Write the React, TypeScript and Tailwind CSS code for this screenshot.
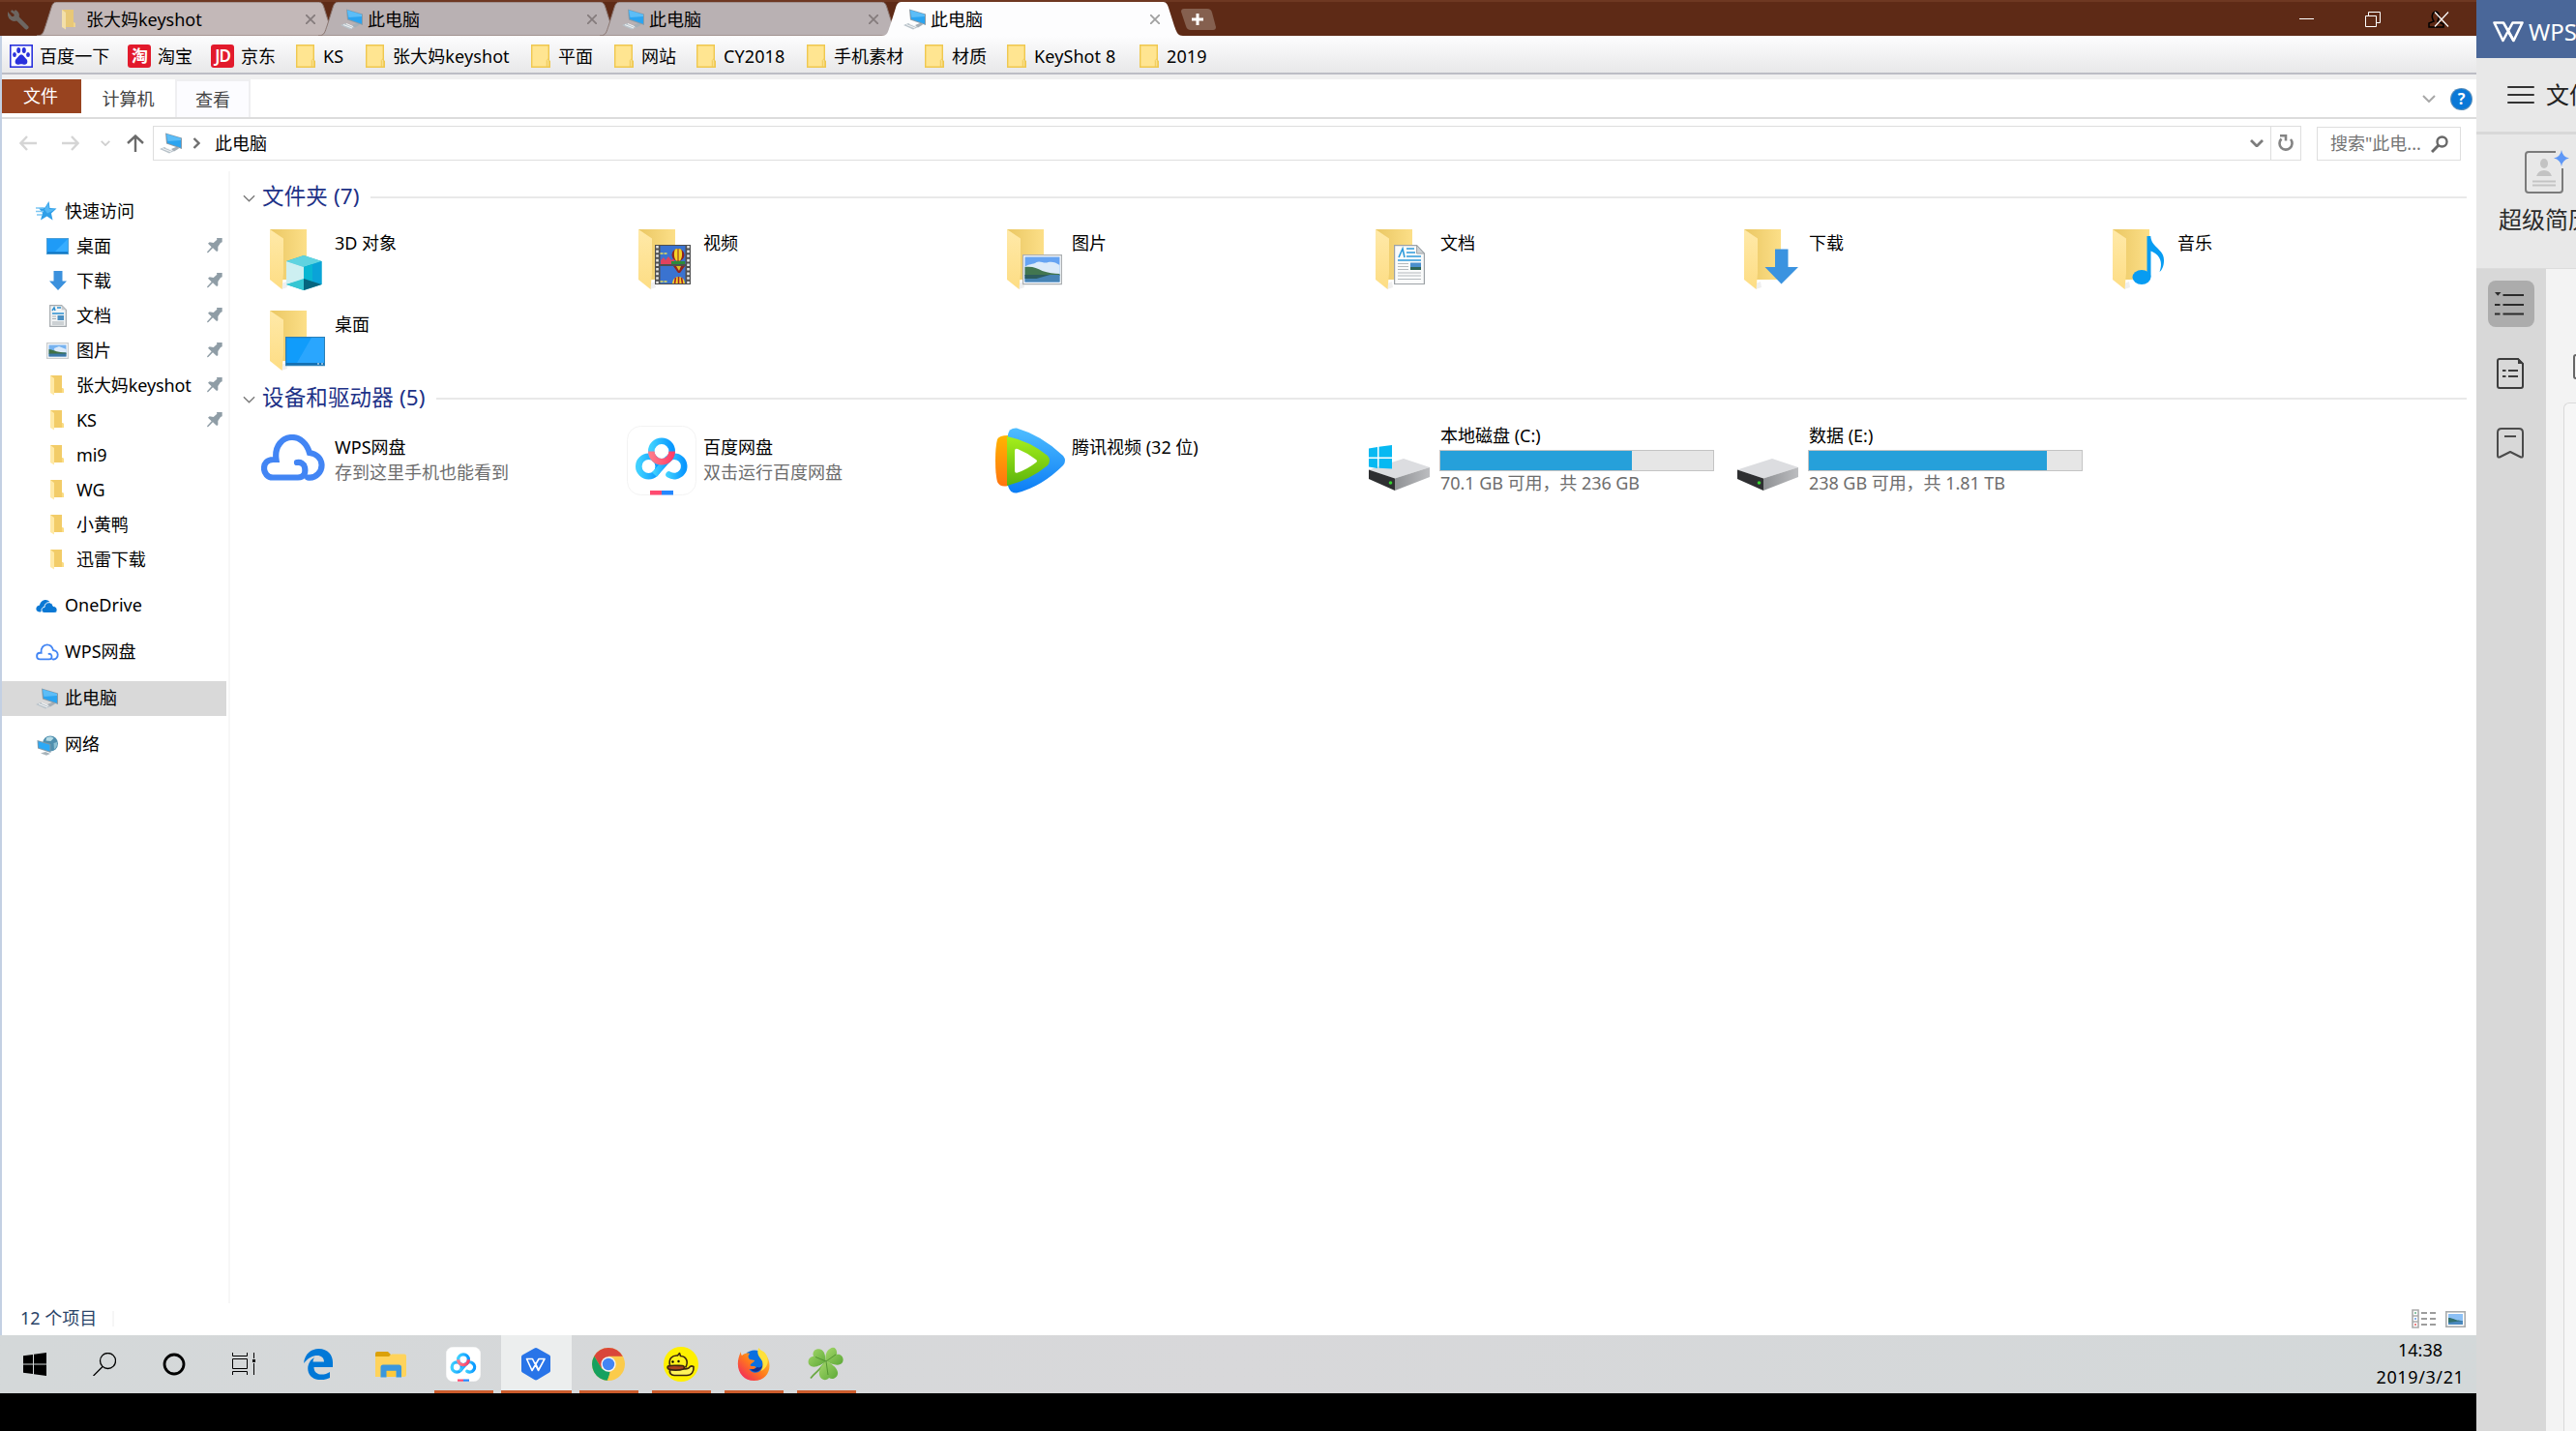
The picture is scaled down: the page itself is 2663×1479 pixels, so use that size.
import type { ReactNode } from "react";
import clsx from "clsx";

/* ---------- small icons ---------- */

function PcIcon({ className }: { className?: string }) {
  return (
    <svg viewBox="0 0 24 22" className={clsx("h-[22px] w-6 shrink-0", className)}>
      <path d="M0 17l5-2 10 4-5 2.600z" fill="#b9c3ca" />
      <path d="M3 16.500l9 3.500M6 15.500l7 3" stroke="#fff" strokeWidth=".8" />
      <path d="M12 17l6-2.500 2 2-5 3z" fill="#a4aeb6" />
      <path d="M6 .5l17 5v11.500L7 11.500z" fill="#8b9aa5" />
      <path d="M7 1.500l15 4.600v9.600L8 10.700z" fill="#2ba4f0" />
      <path d="M7 1.500l15 4.600v2L8.500 9z" fill="#5cbdf7" />
    </svg>
  );
}

function FolderSmall() {
  return (
    <svg viewBox="0 0 16 22" className="h-[22px] w-4 shrink-0">
      <path d="M1 1h12v13l2 1v4H4z" fill="#f2cc68" />
      <path d="M1 1l4 3v17.500L1 19z" fill="#ffe9a6" />
      <path d="M13 14l2 1v4h-2z" fill="#fbdc83" />
    </svg>
  );
}

function FolderFlat() {
  return (
    <svg viewBox="0 0 24 24" className="h-6 w-6 shrink-0">
      <path d="M3.700.7h17.600v15.800l1 .8v6H3.700z" fill="#ffe591" stroke="#efc850" strokeWidth="1.400" />
      <path d="M19.300 23v-6.500l1.800-2v8.500z" fill="#fff0b8" stroke="#efc850" strokeWidth="1" />
    </svg>
  );
}

function BaiduPaw() {
  return (
    <svg viewBox="0 0 24 24" className="h-6 w-6 shrink-0">
      <rect x=".8" y=".8" width="22.400" height="22.400" fill="#fff" stroke="#2a32dc" strokeWidth="1.600" />
      <g fill="#2a32dc">
        <ellipse cx="9.200" cy="6" rx="2" ry="3" />
        <ellipse cx="14.800" cy="6" rx="2" ry="3" />
        <ellipse cx="5" cy="10.500" rx="1.900" ry="2.500" />
        <ellipse cx="19" cy="10.500" rx="1.900" ry="2.500" />
        <path d="M12 10.500c2.400 0 3 2.500 5 4.300 2.300 2 1.500 6-1.400 6-1.500 0-2.200-.6-3.600-.6s-2.100.6-3.600.6c-2.900 0-3.700-4-1.400-6 2-1.800 2.600-4.300 5-4.300z" />
      </g>
    </svg>
  );
}

function BadgeIcon({ children }: { children: ReactNode }) {
  return (
    <span className="flex h-6 w-6 shrink-0 items-center justify-center rounded-[3px] bg-[#e21a2c] text-[17px] leading-none font-semibold tracking-[-1px] text-white">
      {children}
    </span>
  );
}

function Pin() {
  return (
    <svg viewBox="0 0 48 48" className="h-4 w-4" fill="#8f9da6">
      <path d="M30 0h17v13l-5 2-8 12v13l-4 2-12-11L4 45l-4 1 1-4 13-14L3 17l5-4 12 2L31 5z" />
    </svg>
  );
}

function Star() {
  return (
    <svg viewBox="0 0 22 20" className="h-5 w-[22px]">
      <path d="M13.500 0l1 7 7 .5-5.500 5 1.500 7-6-4-6.500 4 2-7.500L3 7l6.500-.5z" fill="#2f9fe8" />
      <path d="M0 7h8M-1 10.500h9M1 14h6" stroke="#7cc6f3" strokeWidth="1.600" />
      <path d="M13 2l.8 6L20 8.500l-8 4-3-4z" fill="#55b8f5" />
    </svg>
  );
}

function DesktopSmall() {
  return (
    <svg viewBox="0 0 23 17" className="h-[17px] w-[23px]">
      <rect x=".5" y=".5" width="22" height="16" fill="#1f9bf7" stroke="#4c9fd6" />
      <path d="M1 14.500h21v1.500H1z" fill="#1272bd" />
      <path d="M22 1v13H9z" fill="#37adff" />
    </svg>
  );
}

function ArrowSmall() {
  return (
    <svg viewBox="0 0 20 20" className="h-5 w-5">
      <path d="M5.500 0h9v10.500H19L10 20 1 10.500h4.500z" fill="#3b91dd" />
    </svg>
  );
}

function DocSmall() {
  return (
    <svg viewBox="0 0 18 23" className="h-[23px] w-[18px]">
      <path d="M.7.700h12l4.600 4.600v17H.7z" fill="#f2f4f5" stroke="#a3a8ac" strokeWidth="1.200" />
      <path d="M12.700.700v4.600h4.600z" fill="#c6cacd" />
      <path d="M3 6l2-3 1 3M8 3h4M3 9h12" stroke="#2d8fd0" strokeWidth="1.500" fill="none" />
      <path d="M8.500 11h6.500v5H8.500z" fill="#4b8fc2" />
      <path d="M3 12h4M3 14.500h4M3 18h12M3 20h12" stroke="#a5adb3" strokeWidth="1.200" />
    </svg>
  );
}

function PictureSmall() {
  return (
    <svg viewBox="0 0 23 17" className="h-[17px] w-[23px]">
      <rect x=".6" y=".6" width="21.800" height="15.800" fill="#fafafa" stroke="#c9ccce" strokeWidth="1.200" />
      <path d="M2.500 2.500h18v12h-18z" fill="#77b3f0" />
      <path d="M8 6l5-2 7.500 3v3h-12z" fill="#dceafb" />
      <path d="M2.500 7c4 0 6 3 18 3.500v1.500h-18z" fill="#3f7045" />
      <path d="M2.500 11.500h18v3h-18z" fill="#3b77a6" />
    </svg>
  );
}

function OneDrive() {
  return (
    <svg viewBox="0 0 23 15" className="h-[15px] w-[23px]">
      <path d="M5 13.500C-1 14-1 7 4 6.500 5 1 11-1 14.500 3" fill="#0a78d4" />
      <path d="M9 14.500c-4 0-4-6 0-6 0-6 8-6.500 9-1 5 0 5.500 7 1 7z" fill="#0a78d4" stroke="#fff" strokeWidth="1" />
    </svg>
  );
}

function Cloud({ className, thin }: { className: string; thin?: boolean }) {
  return (
    <svg viewBox="0 0 66 48" className={className} fill="none" stroke="#4285f4" strokeLinecap="round" strokeWidth={thin ? 5 : 6.200}>
      <path d="M48 44.500C57 46 63 38 62.500 31c-.5-6-5-11-12.500-12C47 9 40 3 32 3 22 3 13.500 12 15.500 26H12.500C6 26 3 30 3 35s3.500 9.500 9 9.500h26C45 44.500 46 39 45 34c-.8-4-4-5.500-8-5" />
    </svg>
  );
}

function Network() {
  return (
    <svg viewBox="0 0 22 21" className="h-[21px] w-[22px]">
      <circle cx="14" cy="8.500" r="8" fill="#4f8fae" />
      <path d="M10 2.500c3-1.500 6-1 7.500.5l-3 3-5-.5z" fill="#b7dce6" />
      <path d="M17.500 8l3.500-1c.5 3-.5 6-3 7.500z" fill="#8cc0d2" />
      <path d="M4 18.500l5-1.500 5 2-4 1.800z" fill="#a8b3ba" />
      <path d="M.5 5l14 4v9L1 13.500z" fill="#7f98a6" />
      <path d="M1.500 6.300l12 3.500v6.700L2 12.700z" fill="#2da9f5" />
    </svg>
  );
}

function Chevron({ className, width = 2 }: { className: string; width?: number }) {
  return (
    <svg viewBox="0 0 14 8" className={className} fill="none" stroke="currentColor" strokeWidth={width}>
      <path d="M1 1l6 6 6-6" />
    </svg>
  );
}

/* ---------- large icons ---------- */

function FolderBig({ children }: { children: ReactNode }) {
  return (
    <svg viewBox="0 0 60 64" className="ml-3 h-16 w-[60px]">
      <defs>
        <linearGradient id="fback" x1="0" y1="0" x2="1" y2="0">
          <stop offset="0" stopColor="#eac763" />
          <stop offset="1" stopColor="#fcdf88" />
        </linearGradient>
        <linearGradient id="ffront" x1="0" y1="0" x2="0" y2="1">
          <stop offset="0" stopColor="#ffe9a8" />
          <stop offset="1" stopColor="#fddd84" />
        </linearGradient>
      </defs>
      <path d="M0 0h38v52H12z" fill="url(#fback)" />
      <path d="M12 56l5-2 1 6-6 2z" fill="#efefef" />
      <path d="M0 0l14 9.500V45l-1.500 17L0 52z" fill="url(#ffront)" />
      {children}
    </svg>
  );
}

const cube = (
  <g>
    <path d="M35 27l18.500 6v24L35 63 17 57V33z" fill="#19b5cb" />
    <path d="M35 27l18.500 6L35 39 17 33z" fill="#5fd3e0" />
    <path d="M17 33l18 6v13l-18 5z" fill="#cdeff1" />
    <path d="M53.500 33L35 39v13l18.500 5z" fill="#0aa3d8" />
    <path d="M35 39l9-3v19l-9-4z" fill="#08b6d2" />
    <path d="M35 51l18.500 6L35 63z" fill="#05657f" />
    <path d="M35 51l-18 6 18 6z" fill="#35c6d3" />
  </g>
);

const film = (
  <g>
    <path d="M17 16h37v41H17z" fill="#4e4f50" />
    <path d="M22.500 17h26v19h-26zM22.500 38h26v18h-26z" fill="#3a73d0" />
    <path d="M19.500 17v39M51.500 17v39" stroke="#e8e8e8" strokeWidth="2.600" strokeDasharray="2.600 2" />
    <path d="M23 32l3-3 2 3 3-4 3 4 3-2v6H23z" fill="#e0425f" />
    <path d="M34 33h14v3H34z" fill="#2b8a3c" />
    <path d="M22.500 25h7M22.500 54h7" stroke="#e7df57" strokeWidth="1.500" strokeDasharray="3 1" />
    <ellipse cx="41" cy="26.500" rx="6.500" ry="6.500" fill="#8f2420" />
    <path d="M38 20.500c-2 4-1 10 1 12h1.500V20zM44 20.500c2 4 1 10-1 12h-1.500V20z" fill="#f5d327" />
    <path d="M36 38h12l-5 7h-2z" fill="#8f2420" />
    <path d="M39 38h5l-2 5z" fill="#e0bd27" />
    <path d="M35 56a6.500 7 0 0113 0z" fill="#f5d327" />
    <path d="M38.500 50l-1 6M44.500 50l1 6M41.500 49v7" stroke="#a5232a" strokeWidth="1.600" />
  </g>
);

const photo = (
  <g>
    <path d="M16.600 26.600h39.800v30H16.600z" fill="#fcfcfc" stroke="#abafb2" strokeWidth="1.200" />
    <path d="M18.500 28.500h36v26h-36z" fill="#66a4f2" />
    <path d="M18.500 39c4-4 8-2 12-5 4-2 8 2 12 0 4-1 8 0 12 3v10h-36z" fill="#dcebfa" />
    <path d="M18.500 39c8-1 12 1 18 4 6 2 12 3 18 3v2h-36z" fill="#427650" />
    <path d="M18.500 47h36v7.500h-36z" fill="#4784b5" />
    <path d="M18.500 47h26l-14 4h-12z" fill="#2c5c5e" />
  </g>
);

const paper = (
  <g>
    <path d="M19.600 16.600h23L50.400 25v31.500H19.600z" fill="#fafbfb" stroke="#9da2a6" strokeWidth="1.200" />
    <path d="M42.600 16.600V25h7.800z" fill="#cfd3d6" stroke="#9da2a6" />
    <path d="M24 29l4-9 2 9M32 20h8M32 24h9M32 28h15M23 32h24" fill="none" stroke="#2e9bdb" strokeWidth="1.600" />
    <path d="M36 34.500h11v7.500H36z" fill="#4b90cd" />
    <path d="M36 39h11v3H36z" fill="#2e6658" />
    <path d="M23 35.500h11M23 38.500h11M23 41.500h11M23 45h24M23 48h24M23 51.500h24" stroke="#b4babe" strokeWidth="1.200" />
  </g>
);

const downArrow = <path d="M32 20.500h13.500V39H56L38.500 56.500 21.500 39H32z" fill="#3a93e0" />;

const note = (
  <g fill="#079cf2">
    <ellipse cx="30" cy="49.500" rx="9.500" ry="7.500" />
    <path d="M35.500 7h3.800c.5 12 13.700 13 13.700 25 0 6-2 10-4.500 12 2-6 2.500-12-2-17-2-2-5-4-7-4.500V49h-4z" />
  </g>
);

const screen = (
  <g>
    <path d="M16.600 27.600h39.800v29H16.600z" fill="#109cfb" stroke="#2a7fb8" strokeWidth="1.200" />
    <path d="M56 28v26H28l15-26z" fill="#33aaff" opacity=".75" />
    <path d="M17 54h39v2H17z" fill="#1370b3" />
    <path d="M49 54.500h2v1h-2zM53 54.500h2v1h-2z" fill="#fff" />
  </g>
);

function BaiduDisk({ className }: { className: string }) {
  return (
    <svg viewBox="0 0 72 72" className={className}>
      <defs>
        <linearGradient id="bd" x1="0" y1="0" x2="1" y2="0">
          <stop offset="0" stopColor="#3fd0ff" />
          <stop offset="1" stopColor="#0a98ff" />
        </linearGradient>
        <linearGradient id="bdpink" x1="0" y1="0" x2="1" y2="0">
          <stop offset="0" stopColor="#ff7a8a" />
          <stop offset="1" stopColor="#ff3f68" />
        </linearGradient>
      </defs>
      <rect x=".5" y=".5" width="71" height="71" rx="14" fill="#fff" stroke="#f3f3f3" />
      <g fill="none" stroke="url(#bd)" strokeWidth="6.600">
        <circle cx="22.500" cy="42" r="10.200" />
        <path d="M42 34.500a10.200 10.200 0 111.500 16" strokeLinecap="round" />
        <path d="M28.500 50.500L43 34" />
        <circle cx="36" cy="26.500" r="10.700" />
      </g>
      <path d="M25.300 26.500a10.700 10.700 0 0021.400 0" fill="none" stroke="url(#bdpink)" strokeWidth="6.600" />
      <path d="M24 67h12v4.500H24z" fill="#ff4a70" />
      <path d="M36 67h12v4.500H36z" fill="#2487ff" />
    </svg>
  );
}

function TencentVideo() {
  return (
    <svg viewBox="0 0 72 68" className="mt-0.5 h-[68px] w-[72px]">
      <defs>
        <linearGradient id="tb" x1="0" y1="0" x2="0" y2="1">
          <stop offset="0" stopColor="#4fbdff" />
          <stop offset="1" stopColor="#0b7df5" />
        </linearGradient>
        <linearGradient id="tg" x1="0" y1="0" x2="0" y2="1">
          <stop offset="0" stopColor="#a6ef1c" />
          <stop offset="1" stopColor="#5cb40c" />
        </linearGradient>
        <linearGradient id="to" x1="0" y1="0" x2="0" y2="1">
          <stop offset="0" stopColor="#ffb400" />
          <stop offset="1" stopColor="#ff7410" />
        </linearGradient>
      </defs>
      <path d="M13 7Q14 0 22 .5 48 8 70 29q4 5 0 10Q48 61 22 67.500 15 68 13 60z" fill="url(#tb)" />
      <path d="M0 34Q0 20 2 12 4 8 13 8v52q-8 2-11-4Q0 48 0 34z" fill="url(#to)" />
      <path d="M12 9Q36 14 54 29q4 5 0 10Q36 54 12 60z" fill="url(#tg)" />
      <path d="M20 24q0-3 3-2 10 4 19 11 2 1.500 0 3-9 7-19 10.500-3 1-3-2z" fill="#fff" />
    </svg>
  );
}

function Drive({ windows }: { windows?: boolean }) {
  return (
    <svg viewBox="0 0 64 48" className="mt-[20px] ml-[5px] h-12 w-16">
      <defs>
        <linearGradient id="dside" x1="0" y1="0" x2="1" y2="0">
          <stop offset="0" stopColor="#8f9194" />
          <stop offset="1" stopColor="#bcbdc0" />
        </linearGradient>
      </defs>
      <path d="M0 25.500L36 14l27 9-36 11.500z" fill="#dcdde0" />
      <path d="M0 25.500l27 9V47L0 35z" fill="#2e2f31" />
      <path d="M27 34.500L63 23v10L27 47z" fill="url(#dside)" />
      <circle cx="22.500" cy="39" r="1.800" fill="#35d32e" />
      {windows && (
        <path d="M0 3.500L9 2v10.500H0zM10.500 1.700L24 0v12.500H10.500zM0 14h9v10L0 22.500zM10.500 14H24v10.500l-13.500-.8z" fill="#07b9f2" />
      )}
    </svg>
  );
}

/* ---------- tab strip ---------- */

const tabs = [
  { label: "张大妈keyshot", folder: true },
  { label: "此电脑" },
  { label: "此电脑" },
  { label: "此电脑", active: true },
];

function TitleBar() {
  return (
    <div className="flex h-[37px] items-start border-t-2 border-[#6e3822] bg-[#5e2a16]">
      <svg viewBox="0 0 24 24" className="mt-1.5 ml-2 h-6 w-[22px]" fill="none" stroke="#6d6661" strokeLinecap="round">
        <path d="M10 10l11 11" strokeWidth="5" />
        <path d="M5 3l4 3-1 4-4 .5L1.500 7.500A6 6 0 0010 12" strokeWidth="3" />
        <path d="M9 3a6 6 0 012 7" strokeWidth="3" />
      </svg>
      <div className="ml-2 flex">
        {tabs.map((t, i) => (
          <div
            key={i}
            className={clsx("relative h-[35px] w-[312px]", i > 0 && "-ml-[21px]", t.active && "z-10")}
          >
            <svg viewBox="0 0 312 35" className="absolute inset-0 h-full w-full">
              <path
                d="M0 35C7 35 7 30 9 25l6-19c1.500-5 3-6 7-6h268c4 0 5.500 1 7 6l6 19c2 5 3 10 9 10z"
                fill={t.active ? "#fdfdfe" : i === 0 ? "#c3b8b8" : "#b9b1b3"}
                stroke={t.active ? "none" : "#8a7671"}
                strokeWidth="1"
              />
            </svg>
            <div className="relative flex h-full items-center pl-[23px]">
              {t.folder ? (
                <span className="flex w-6 justify-center pr-1 opacity-80"><FolderSmall /></span>
              ) : (
                <PcIcon />
              )}
              <span className="ml-1 w-[227px] text-[18px] leading-6">{t.label}</span>
              <svg viewBox="0 0 10 10" className="h-2.5 w-2.5" stroke={t.active ? "#a0a0a0" : "#857c7d"} strokeWidth="1.800">
                <path d="M0 0l10 10M10 0L0 10" />
              </svg>
            </div>
          </div>
        ))}
      </div>
      <svg viewBox="0 0 36 22" className="mt-[7px] -ml-0.5 h-[22px] w-9">
        <path d="M0 3q0-3 3-3h24q4 0 5 4l4 15q0 3-3 3H10q-4 0-5-4z" fill="#85604f" />
        <path d="M17 5v12M11 11h12" stroke="#fff" strokeWidth="3" />
      </svg>
      <div className="mr-[28px] ml-auto flex h-[35px] items-center">
        <span className="h-px w-[15px] bg-white" />
        <svg viewBox="0 0 16 16" className="ml-[53px] h-4 w-4" fill="none" stroke="#fff">
          <path d="M.5 4.500h11v11H.5zM3.500 4V.5h12v11H12" />
        </svg>
        <svg viewBox="0 0 22 18" className="ml-[49px] h-[18px] w-[22px]" fill="none">
          <path d="M1 17v-4l5-2C4 8 4 5 5 3q3-4 6 0c1 3 0 5-1 8l6 3v3z" stroke="#000" strokeWidth="1.500" />
          <path d="M7 1.500l14 15M21 1.500l-14 15" stroke="#fff" strokeWidth="1.200" />
        </svg>
      </div>
    </div>
  );
}

const bookmarks = [
  { label: "百度一下", w: "w-[122px]", icon: <BaiduPaw /> },
  { label: "淘宝", w: "w-[86px]", icon: <BadgeIcon>淘</BadgeIcon> },
  { label: "京东", w: "w-[85px]", icon: <BadgeIcon>JD</BadgeIcon> },
  { label: "KS", w: "w-[72px]" },
  { label: "张大妈keyshot", w: "w-[171px]" },
  { label: "平面", w: "w-[86px]" },
  { label: "网站", w: "w-[85px]" },
  { label: "CY2018", w: "w-[114px]" },
  { label: "手机素材", w: "w-[122px]" },
  { label: "材质", w: "w-[85px]" },
  { label: "KeyShot 8", w: "w-[137px]" },
  { label: "2019", w: "w-[90px]" },
];

function BookmarkBar() {
  return (
    <div className="flex h-10 items-center border-b-2 border-[#bcbdc5] bg-linear-to-b from-[#fdfdfe] to-[#e8e8e9] pl-2 text-[18px]">
      {bookmarks.map((b) => (
        <div key={b.label} className={clsx("flex shrink-0 items-center gap-[7px] pt-[3px] leading-6 whitespace-nowrap", b.w)}>
          {b.icon ?? <FolderFlat />}
          <span className="tracking-[0.1px]">{b.label}</span>
        </div>
      ))}
    </div>
  );
}

function Ribbon() {
  return (
    <div className="flex h-[46px] items-start border-t-[5px] border-b-2 border-t-[#f0f0f0] border-b-[#dcdcdc] text-[18px] text-[#444]">
      <div className="flex h-[35px] w-[82px] items-center justify-center bg-[#98431f] pr-0.5 text-white">文件</div>
      <div className="flex h-[41px] w-[97px] items-center justify-center">计算机</div>
      <div className="flex h-[39px] w-[78px] items-center justify-center border-2 border-b-0 border-[#efeff1] bg-[#fcfcff] pt-0.5">查看</div>
      <div className="mr-[5px] ml-auto flex h-10 items-center">
        <Chevron className="mr-4 h-2 w-[14px] text-[#a8a8a8]" />
        <span className="flex h-[21px] w-[21px] items-center justify-center rounded-full bg-[#0a78d7] text-[16px] font-bold text-white ring-1 ring-[#5a8fbb]">
          ?
        </span>
      </div>
    </div>
  );
}

function AddressRow() {
  return (
    <div className="flex h-[43px] items-start pt-[7px] text-[18px]">
      <div className="flex h-[35px] w-[156px] items-center pl-[18px]">
        <svg viewBox="0 0 18 16" className="h-4 w-[18px]" fill="none" stroke="#d5d5d5" strokeWidth="2.400">
          <path d="M8 1L1.500 8 8 15M2 8h16" />
        </svg>
        <svg viewBox="0 0 18 16" className="ml-[26px] h-4 w-[18px]" fill="none" stroke="#d5d5d5" strokeWidth="2.400">
          <path d="M10 1l6.500 7L10 15M16 8H0" />
        </svg>
        <Chevron className="ml-[22px] h-[6px] w-[10px] text-[#cfcfcf]" width={2.400} />
        <svg viewBox="0 0 18 18" className="ml-[17px] h-[18px] w-[18px]" fill="none" stroke="#6b6b6b" strokeWidth="2.400">
          <path d="M1 9l8-7.500L17 9M9 2v16" />
        </svg>
      </div>
      <div className="flex h-9 w-[2221px] items-center border border-[#dedede] pl-1.5">
        <PcIcon />
        <svg viewBox="0 0 8 12" className="ml-[10px] h-3 w-2" fill="none" stroke="#6f6f6f" strokeWidth="2.400">
          <path d="M1.500 1l5 5-5 5" />
        </svg>
        <span className="ml-[15px]">此电脑</span>
        <Chevron className="mr-[7px] ml-auto h-2 w-[14px] text-[#7c7c7c]" width={2.800} />
        <div className="flex h-full w-[31px] items-center justify-center border-l border-[#dedede]">
          <svg viewBox="0 0 16 18" className="h-[18px] w-4" fill="none" stroke="#848484" strokeWidth="2.600">
            <path d="M13 5a6.500 6.500 0 11-9.500-.5M8 6.500V1.300H2" />
          </svg>
        </div>
      </div>
      <div className="mt-px ml-4 flex h-[35px] w-[149px] items-center border border-[#dedede] pl-[13px] text-[#757575]">
        <span className="w-[104px] whitespace-nowrap">搜索"此电...</span>
        <svg viewBox="0 0 18 18" className="h-[18px] w-[18px]" fill="none" stroke="#686868">
          <circle cx="11.500" cy="6.500" r="5" strokeWidth="2.400" />
          <path d="M8 10l-7 7" strokeWidth="3" />
        </svg>
      </div>
    </div>
  );
}

/* ---------- explorer body ---------- */

const quick = [
  { label: "桌面", icon: <DesktopSmall />, pin: true },
  { label: "下载", icon: <ArrowSmall />, pin: true },
  { label: "文档", icon: <DocSmall />, pin: true },
  { label: "图片", icon: <PictureSmall />, pin: true },
  { label: "张大妈keyshot", pin: true },
  { label: "KS", pin: true },
  { label: "mi9" },
  { label: "WG" },
  { label: "小黄鸭" },
  { label: "迅雷下载" },
];

const roots = [
  { label: "OneDrive", icon: <OneDrive /> },
  { label: "WPS网盘", icon: <Cloud className="h-[18px] w-6" thin /> },
  { label: "此电脑", icon: <PcIcon />, selected: true },
  { label: "网络", icon: <Network /> },
];

function Sidebar() {
  return (
    <div className="mt-[11px] flex h-[1170px] w-[236px] shrink-0 flex-col border-r-2 border-[#f7f7f7] pt-[23px] text-[18px]">
      <div className="flex h-9 items-center pl-[35px]">
        <span className="flex w-6"><Star /></span>
        <span className="ml-1.5">快速访问</span>
      </div>
      {quick.map((q) => (
        <div key={q.label} className="flex h-9 items-center pr-1.5 pl-[45px]">
          <span className={clsx("flex w-[25px] justify-center", !q.icon && "pr-0.5")}>{q.icon ?? <FolderSmall />}</span>
          <span className="ml-[7px] whitespace-nowrap tracking-[-0.1px]">{q.label}</span>
          {q.pin && <span className="ml-auto"><Pin /></span>}
        </div>
      ))}
      {roots.map((r) => (
        <div key={r.label} className={clsx("mt-3 flex h-9 w-[232px] items-center pl-[34px]", r.selected && "bg-[#d9d9d9]")}>
          <span className="flex w-[25px] justify-center">{r.icon}</span>
          <span className="ml-1.5 pb-px">{r.label}</span>
        </div>
      ))}
    </div>
  );
}

function GroupHeader({ children }: { children: ReactNode }) {
  return (
    <div className="flex h-[35px] items-center pr-0.5 pl-[13px] text-[22.5px] leading-8 text-[#1e3287]">
      <Chevron className="h-2 w-[13px] text-[#7a7a7a]" width={1.500} />
      <span className="ml-[7px] pb-[3px] tracking-[0.15px] whitespace-nowrap">{children}</span>
      <span className="mb-0.5 ml-[11px] h-0.5 flex-1 bg-[#e9e9e9]" />
    </div>
  );
}

const folders = [
  { label: "3D 对象", art: cube },
  { label: "视频", art: film },
  { label: "图片", art: photo },
  { label: "文档", art: paper },
  { label: "下载", art: downArrow },
  { label: "音乐", art: note },
  { label: "桌面", art: screen },
];

const devices = [
  { label: "WPS网盘", sub: "存到这里手机也能看到", icon: <Cloud className="mt-[9px] ml-[3px] h-12 w-[66px]" /> },
  { label: "百度网盘", sub: "双击运行百度网盘", icon: <BaiduDisk className="h-[72px] w-[72px]" /> },
  { label: "腾讯视频 (32 位)", icon: <TencentVideo /> },
];

const drives = [
  { label: "本地磁盘 (C:)", sub: "70.1 GB 可用，共 236 GB", used: 70.200, windows: true },
  { label: "数据 (E:)", sub: "238 GB 可用，共 1.81 TB", used: 87.100 },
];

function Content() {
  return (
    <div className="w-[2314px] pt-[21px] text-[18px]">
      <GroupHeader>文件夹 (7)</GroupHeader>
      <div className="mt-[10px] grid h-[163px] auto-rows-[84px] grid-cols-[repeat(6,381px)] pl-[29px]">
        {folders.map((f) => (
          <div key={f.label} className="flex">
            <div className="w-[72px] pt-[5px]"><FolderBig>{f.art}</FolderBig></div>
            <span className="mt-[7px] ml-[7px] leading-6">{f.label}</span>
          </div>
        ))}
      </div>
      <GroupHeader>设备和驱动器 (5)</GroupHeader>
      <div className="mt-[10px] grid grid-cols-[repeat(6,381px)] pl-[29px]">
        {devices.map((d) => (
          <div key={d.label} className="flex">
            <div className="w-[72px]">{d.icon}</div>
            <div className="mt-[9px] ml-[7px]">
              <div className="leading-[26px]">{d.label}</div>
              {d.sub && <div className="leading-[26px] text-[#6d6d6d]">{d.sub}</div>}
            </div>
          </div>
        ))}
        {drives.map((d) => (
          <div key={d.label} className="flex">
            <div className="w-[72px]"><Drive windows={d.windows} /></div>
            <div className="-mt-0.5 ml-1.5 w-[284px]">
              <div className="pl-px leading-[25px]">{d.label}</div>
              <div className="mt-0.5 h-[22px] border border-[#c4c4c4] bg-[#e6e6e6]">
                <div className="h-full bg-[#26a0da]" style={{ width: `${d.used}%` }} />
              </div>
              <div className="pl-px leading-[25px] tracking-[-0.05px] whitespace-nowrap text-[#6d6d6d]">{d.sub}</div>
            </div>
          </div>
        ))}
      </div>
    </div>
  );
}

function StatusBar() {
  return (
    <div className="flex h-[34px] items-center pr-[11px] pl-[19px] text-[18px] text-[#2a4468]">
      <span className="w-[95px] pb-px whitespace-nowrap">12 个项目</span>
      <span className="h-4 w-0.5 bg-[#f6f6f6]" />
      <svg viewBox="0 0 26 20" className="ml-auto h-5 w-[26px]">
        <path d="M1 1h6v18H1zM1 7h6M1 13h6" fill="#fff" stroke="#aaa" strokeWidth="1.600" />
        <path d="M3.200 3.200h1.600v1.600H3.200z" fill="#3a9a6a" />
        <path d="M3.200 9.200h1.600v1.600H3.200z" fill="#3a7ae0" />
        <path d="M3.200 15.200h1.600v1.600H3.200z" fill="#e02a2a" />
        <path d="M10 4h6M19 4h6M10 10h6M19 10h6M10 16h6M19 16h6" stroke="#7d7d7d" strokeWidth="1.300" />
      </svg>
      <svg viewBox="0 0 21 17" className="ml-[9px] h-[17px] w-[21px]">
        <rect x=".8" y=".8" width="19.400" height="15.400" fill="#fff" stroke="#a9acae" strokeWidth="1.600" />
        <path d="M3 3h15v11H3z" fill="#8cc0f5" />
        <path d="M3 7c5 0 7 3 15 3v4H3z" fill="#33706e" />
        <path d="M3 12l15-2v4H3z" fill="#4a88be" />
      </svg>
    </div>
  );
}

/* ---------- taskbar ---------- */

function Edge() {
  return (
    <svg viewBox="0 0 30 32" className="h-8 w-[30px]">
      <path
        d="M0 15C1 5 8 0 15.500 0 25 0 30 6.500 30 14v5H10.500c0 9 10.500 9 16.500 5v6c-4 2-8 2.500-12 2C6 31 1.500 22 6 14c1-2 2.500-3.500 5-5-1 1.500-1.500 3-1.500 4.500H21c0-9-13-9-21 1.500z"
        fill="#0078d7"
      />
    </svg>
  );
}

function FileExplorer() {
  return (
    <svg viewBox="0 0 32 27" className="h-[27px] w-8">
      <path d="M0 2q0-2 2-2h11l3 3-2 3H0z" fill="#dba10a" />
      <path d="M0 5h14l3-2.500h13q2 0 2 2V24q0 2-2 2H0z" fill="#ffd35c" />
      <path d="M11 18h10v8H11z" fill="#ffc93a" />
      <path d="M5.500 26.500V16q0-2.500 2.500-2.500h16.500q2.500 0 2.500 2.500v10.500h-5.500v-6.700h-10v6.700z" fill="#3b97dd" />
    </svg>
  );
}

function WpsHex() {
  return (
    <svg viewBox="0 0 30 34" className="h-[34px] w-[30px]">
      <path d="M13.500.5q1.500-.8 3 0L29 7.500q1 .6 1 2v14q0 1.500-1 2l-12.500 7.500q-1.500.8-3 0L1 25.500q-1-.6-1-2v-14q0-1.500 1-2z" fill="#2874e8" />
      <path d="M5.500 11.500h6l6 12 6.500-12h-6L11 23.500zM14 15l4 8.500" fill="none" stroke="#fff" strokeWidth="1.600" strokeLinejoin="round" />
    </svg>
  );
}

function Chrome() {
  return (
    <svg viewBox="0 0 34 34" className="h-[34px] w-[34px]">
      <circle cx="17" cy="17" r="17" fill="#fbcb4b" />
      <path d="M17 0a17 17 0 0114.700 8.700H17L9.500 21 2.300 8.500A17 17 0 0117 0z" fill="#d9463a" />
      <path d="M2.300 8.500L10 21.500l8.500 3.500L16.500 34A17 17 0 012.300 8.500z" fill="#16a15f" />
      <path d="M24 20l-7.500 14h-1l4-9z" fill="#fbcb4b" />
      <circle cx="17" cy="17" r="7.700" fill="#f4f4f4" />
      <circle cx="17" cy="17" r="6.200" fill="#4385f3" />
    </svg>
  );
}

function Duck() {
  return (
    <svg viewBox="0 0 36 36" className="h-9 w-9">
      <circle cx="18" cy="18" r="18" fill="#fff000" />
      <g stroke="#3a2410" strokeWidth="1.600" strokeLinejoin="round">
        <path d="M7 23c-2 4 1 6.500 4 6.500h13c5 0 7.500-4 7-9-2-1-4-.5-5 1.500-2 1-5 1-7 .5" fill="#fff45a" />
        <path d="M6.500 19C5 12 9 8.500 14.500 9l2-2.500 1 3C24 10 26 16 22.500 21.500" fill="#fff21c" />
        <path d="M4.500 20c4-1.500 11-.5 15-.5 2 0 2.500 2.500 1 3.500-4 1.500-12 1.500-15.500 0-1-.8-1.200-2.200-.5-3z" fill="#a8431d" />
      </g>
      <circle cx="9.500" cy="15.500" r="1.200" />
      <circle cx="15.500" cy="15" r="1.200" />
    </svg>
  );
}

function Firefox() {
  return (
    <svg viewBox="0 0 34 35" className="h-[35px] w-[34px]">
      <defs>
        <linearGradient id="fx" x1="1" y1="0" x2="0" y2="1">
          <stop offset="0" stopColor="#ffd12e" />
          <stop offset=".5" stopColor="#ff7a1c" />
          <stop offset="1" stopColor="#f0146c" />
        </linearGradient>
      </defs>
      <circle cx="18" cy="15" r="12.500" fill="#0a6fe0" />
      <path d="M4 4c0 2 0 3 1 4 2-2 5-3 8-2-2 2-2 4 0 6l5 1c0 2-4 3-4.500 5 1 2 5 0 6 2-1 3-5 2-7 2 3 6 14 5 14-5 0-4-2-7-4-10 3 1 6 4 8 7 1-2 0-5-1-7 8 10 4 27-12 27C4 34-4 20 4 4z" fill="url(#fx)" />
      <path d="M22.500 0c-3 6 0 9 3 13 2 3 1.500 8-1 11 8-3 10-14 3-20-2-1-4-2-5-4z" fill="#ffe13c" />
      <path d="M14 22c3 5 11 3 12-4-1 2-3 3-5 2-2 1-4 3-7 2z" fill="#152f8c" />
    </svg>
  );
}

function Clover() {
  return (
    <svg viewBox="0 0 38 36" className="h-9 w-[38px]">
      <defs>
        <linearGradient id="leaf" x1="0" y1="0" x2="1" y2="1">
          <stop offset="0" stopColor="#a5d86a" />
          <stop offset="1" stopColor="#5ca838" />
        </linearGradient>
      </defs>
      <path d="M18 16c-3 6-10 10-15 16.500" stroke="#6aa842" strokeWidth="1.800" fill="none" />
      <g fill="url(#leaf)">
        <path d="M19 15C18 10 18 4 13 2.500 8 1 4 5 6 10c-5 0-7 6-4 9 4 4 12 0 17-4z" />
        <path d="M19 15c-1-4-1-10 4-13 4-3 8 0 7 6 5-1 8 4 6 8-3 5-12 2-17-1z" />
        <path d="M19 15c-4 3-8 9-7 14 1 5 7 7 10 3 4 3 10-1 9-6-1-5-7-9-12-11z" />
      </g>
      <path d="M19 15L8 10.500M19 15l10-7M19 15l2 14" stroke="#4e8f2c" strokeWidth=".9" />
    </svg>
  );
}

const apps = [
  { id: "edge", icon: <Edge /> },
  { id: "files", icon: <FileExplorer /> },
  { id: "disk", icon: <BaiduDisk className="h-9 w-9" />, running: true },
  { id: "wps", icon: <WpsHex />, running: true, active: true },
  { id: "chrome", icon: <Chrome />, running: true },
  { id: "duck", icon: <Duck />, running: true },
  { id: "firefox", icon: <Firefox />, running: true },
  { id: "clover", icon: <Clover />, running: true },
];

function Taskbar() {
  return (
    <div className="flex h-[60px] bg-linear-to-r from-[#d4d8d9] via-[#d8d8da] to-[#d3d8d9]">
      <div className="grid w-[292px] grid-cols-[repeat(4,72px)] place-items-center">
        <svg viewBox="0 0 24 24" className="h-6 w-6">
          <path d="M0 3.300l10-1.400v9.600H0zM11 1.700L24 0v11.500H11zM0 12.500h10v9.600L0 20.700zM11 12.500h13V24l-13-1.700z" />
        </svg>
        <svg viewBox="0 0 24 24" className="h-6 w-6" fill="none" stroke="#000" strokeWidth="1.300">
          <circle cx="15.500" cy="8.500" r="8" />
          <path d="M10 14.500L.5 24" />
        </svg>
        <svg viewBox="0 0 24 24" className="h-6 w-6" fill="none" stroke="#000" strokeWidth="2.800">
          <circle cx="12" cy="12" r="10" />
        </svg>
        <svg viewBox="0 0 24 24" className="h-6 w-6" fill="none" stroke="#000">
          <path d="M.5 0v3.500h15V0M.5 6.500h15v10H.5zM.5 23v-3.500h15V23M22.500 0v6M22.500 11v12" />
          <path d="M21 7h3v3h-3z" fill="#000" stroke="none" />
        </svg>
      </div>
      {apps.map((a) => (
        <div key={a.id} className="flex w-[75px] flex-col items-center">
          <div className={clsx("flex h-[57px] items-center justify-center pt-[3px] pr-0.5", a.active ? "w-[73px] bg-[#eceeee]" : "w-[61px]")}>
            {a.icon}
          </div>
          {a.running && <div className={clsx("h-[3px] bg-[#cb5c2c]", a.active ? "w-[73px]" : "w-[61px]")} />}
        </div>
      ))}
      <div className="mr-2.5 ml-auto w-24 pt-px text-center text-[18px] leading-7">
        <div>14:38</div>
        <div className="tracking-[0.6px]">2019/3/21</div>
      </div>
    </div>
  );
}

/* ---------- neighbouring WPS window ---------- */

function WpsWindow() {
  return (
    <div className="flex h-[1479px] w-[103px] shrink-0 flex-col overflow-hidden bg-[#e8e8e8] text-[24px] whitespace-nowrap">
      <div className="flex h-[60px] shrink-0 items-center bg-[#4a6799] pt-1.5 pl-[17px] text-white">
        <svg viewBox="0 0 32 22" className="h-[22px] w-8 shrink-0" fill="none" stroke="#fff" strokeWidth="2.600" strokeLinejoin="round">
          <path d="M1.500 1.500h9.500l10.500 18.500 9-18.500h-10L10.500 20z" />
          <path d="M15.500 9.500l6 10.500" />
        </svg>
        <span className="ml-[5px]">WPS</span>
      </div>
      <div className="flex h-[79px] shrink-0 items-center border-b-[3px] border-[#d8d8d8] pl-8">
        <div className="flex w-7 shrink-0 flex-col gap-1.5">
          <span className="h-0.5 rounded bg-[#333]" />
          <span className="h-0.5 rounded bg-[#333]" />
          <span className="h-0.5 rounded bg-[#333]" />
        </div>
        <span className="ml-3 text-[#222]">文件</span>
      </div>
      <div className="h-[139px] shrink-0 border-b border-[#dcdcdc] pt-[15px] pl-[23px]">
        <svg viewBox="0 0 46 46" className="ml-[27px] h-[46px] w-[46px]" fill="none">
          <path d="M32 3H4Q1 3 1 6v36q0 3 3 3h32q3 0 3-3V20" stroke="#7b7b7b" strokeWidth="2" />
          <path d="M38 1q1 7 8 8.500-7 1.500-8 8.500-1-7-8-8.500 7-1.500 8-8.500z" fill="#5e97f6" />
          <ellipse cx="20" cy="15" rx="4" ry="5" fill="#c3c3c3" />
          <path d="M12 28q2-6 8-6t8 6z" fill="#c3c3c3" />
          <path d="M8 33.500h24M8 37.500h24" stroke="#c3c3c3" strokeWidth="1.800" />
        </svg>
        <div className="mt-[10px] leading-[34px] text-[#2b2b2b]">超级简历</div>
      </div>
      <div className="flex flex-1">
        <div className="flex w-[72px] shrink-0 flex-col items-center bg-[#d8d8d8] pt-3">
          <div className="flex h-12 w-12 items-center justify-center rounded-lg bg-[#acacac]">
            <svg viewBox="0 0 30 26" className="mr-1 h-[26px] w-[30px]" fill="none" stroke="#2b2b2b" strokeWidth="2">
              <path d="M8.500 4H30M8.500 14H30M8.500 23.500H30M0 14h5.500M0 23.500h5.500" />
              <path d="M0 1h6.500L3.200 4.800z" fill="#2b2b2b" stroke="none" />
            </svg>
          </div>
          <svg viewBox="0 0 28 32" className="mt-8 mr-0.5 h-8 w-7" fill="none" stroke="#3c3c3c" strokeWidth="2">
            <path d="M22 1H3Q1 1 1 3v26q0 2 2 2h22q2 0 2-2V6z" />
            <path d="M22 0v6h6z" fill="#3c3c3c" stroke="none" />
            <path d="M6 13h3.500M12 13h10M6 19h3.500M12 19h10" />
          </svg>
          <svg viewBox="0 0 28 32" className="mt-10 mr-0.5 h-8 w-7" fill="none" stroke="#4b4b4b" strokeWidth="2" strokeLinejoin="round">
            <path d="M1 5q0-4 4-4h18q4 0 4 4v24q0 2-2 1.500L14 25 3 30.500Q1 31 1 29zM8 9h12" />
          </svg>
        </div>
        <div className="flex flex-1 flex-col bg-[#f3f3f3]">
          <div className="mt-[88px] ml-[28px] h-[26px] w-4 rounded-[3px] border-2 border-[#666]" />
          <div className="mt-6 ml-[18px] w-10 flex-1 rounded-tl-md border-t border-l border-[#dadada] bg-[#f6f6f6]" />
        </div>
      </div>
    </div>
  );
}

export default function App() {
  return (
    <div className="flex h-[1479px] w-[2663px] overflow-hidden bg-black font-['Noto_Sans','Noto_Sans_CJK_SC',sans-serif] text-black">
      <div className="h-[1440px] w-[2560px] shrink-0 bg-white">
        <TitleBar />
        <div className="flex h-[1343px] flex-col border-l-2 border-[#c3d0e3]">
          <BookmarkBar />
          <Ribbon />
          <AddressRow />
          <div className="flex h-[1180px] shrink-0">
            <Sidebar />
            <Content />
          </div>
          <StatusBar />
        </div>
        <Taskbar />
      </div>
      <WpsWindow />
    </div>
  );
}
